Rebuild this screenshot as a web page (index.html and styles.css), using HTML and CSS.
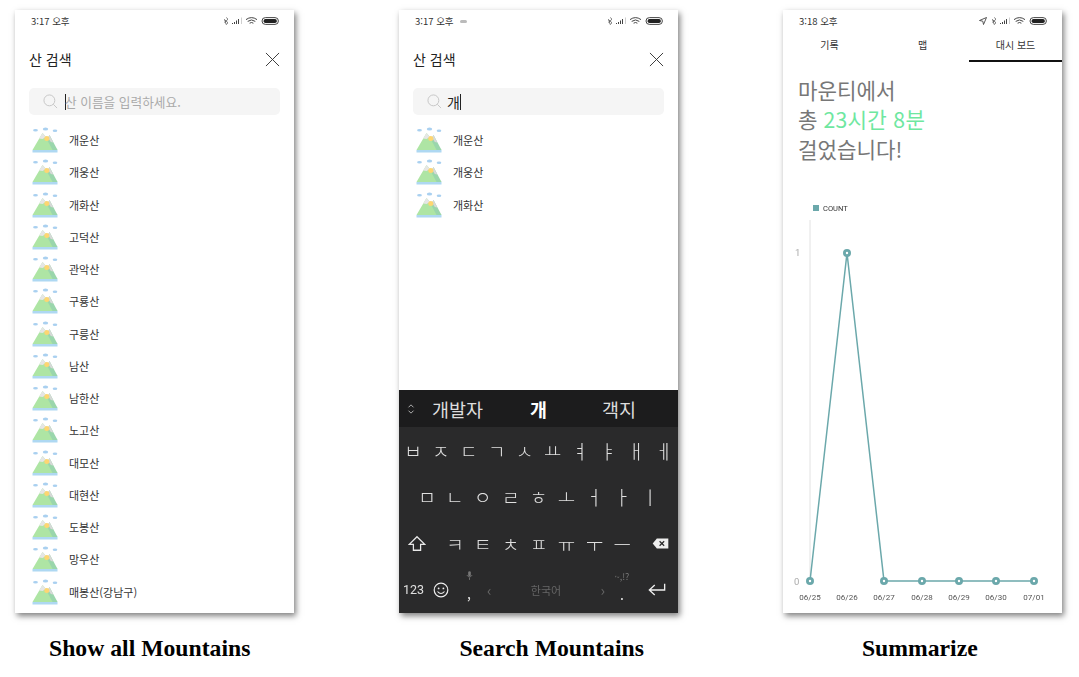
FILE: index.html
```html
<!DOCTYPE html>
<html lang="ko">
<head>
    <meta charset="UTF-8">
    <meta name="viewport" content="width=device-width, initial-scale=1.0">
    <title>Mountain app screens</title>
    <link rel="stylesheet" href="styles.css">
</head>
<body>

    <svg class="defs" width="0" height="0">
        <symbol id="mountain" viewBox="0 0 26 26">
            <rect x="0.500" y="23" width="25" height="2.500" fill="#aed8f2"/>
            <path d="M0.500 23 L10.500 6 L25.500 23 Z" fill="#aee5a4"/>
            <path d="M15 12.500 L17.500 8 L25.500 23 L20.500 23 Z" fill="#9ad6ac"/>
            <path d="M17.500 8 L21.300 15.500 L18.800 15 L16 10.500 Z" fill="#d8d8d8"/>
            <path d="M7.200 11.600 L10.500 6 L14 10 L10.500 12 Z" fill="#e6e6e6"/>
            <circle cx="14.800" cy="11.500" r="2.500" fill="#fdd672"/>
            <ellipse cx="3.500" cy="3.200" rx="2.400" ry="1.300" fill="#a9d0f0"/>
            <ellipse cx="13.500" cy="2" rx="2.700" ry="1.500" fill="#a9d0f0"/>
            <ellipse cx="23" cy="3.800" rx="2.300" ry="1.300" fill="#a9d0f0"/>
        </symbol>
        <symbol id="search" viewBox="0 0 16 16">
            <circle cx="6.800" cy="6.800" r="5.800" fill="none" stroke="#c4c4c4"/>
            <path d="M11 11 L15 15" stroke="#c4c4c4"/>
        </symbol>
        <symbol id="close" viewBox="0 0 16 16">
            <path d="M1 1 L15 15 M15 1 L1 15" stroke="#333" stroke-width="1"/>
        </symbol>
        <symbol id="status" viewBox="0 0 56 8">
            <path d="M3.200 0.500 L5 2.200 L1.500 5.500 M1.500 2.500 L5 5.800 L3.200 7.500 Z" fill="none" stroke="#444" stroke-width="0.700"/>
            <path d="M9 7 h1 v-1 h-1 Z M11 7 h1 v-2 h-1 Z M13 7 h1 v-3.500 h-1 Z M15 7 h1 v-5 h-1 Z" fill="#444"/>
            <path d="M18 7 h0.700 v-6.500 h-0.700 Z" fill="#bbb"/>
            <path d="M23 2.600 Q28.500 -1.400 34 2.600 M24.700 4.400 Q28.500 1.500 32.300 4.400 M26.600 6.200 Q28.500 4.800 30.400 6.200" fill="none" stroke="#444" stroke-width="1"/>
            <rect x="39" y="0.600" width="16.400" height="6.800" rx="3.400" fill="none" stroke="#333" stroke-width="0.900"/>
            <rect x="40.600" y="2" width="13.200" height="4" rx="1.800" fill="#222"/>
        </symbol>
    </svg>

    <main class="screens">

        <section class="phone">
            <div class="statusbar">
                <span class="time">3:17 오후</span>
                <svg class="status-icons"><use href="#status"/></svg>
            </div>
            <div class="title-row">
                <h2>산 검색</h2>
                <svg class="close"><use href="#close"/></svg>
            </div>
            <div class="searchbox">
                <svg class="search-icon"><use href="#search"/></svg>
                <span class="caret"></span>
                <span class="placeholder">산 이름을 입력하세요.</span>
            </div>
            <ul class="mountains">
                <li><svg><use href="#mountain"/></svg>개운산</li>
                <li><svg><use href="#mountain"/></svg>개웅산</li>
                <li><svg><use href="#mountain"/></svg>개화산</li>
                <li><svg><use href="#mountain"/></svg>고덕산</li>
                <li><svg><use href="#mountain"/></svg>관악산</li>
                <li><svg><use href="#mountain"/></svg>구룡산</li>
                <li><svg><use href="#mountain"/></svg>구릉산</li>
                <li><svg><use href="#mountain"/></svg>남산</li>
                <li><svg><use href="#mountain"/></svg>남한산</li>
                <li><svg><use href="#mountain"/></svg>노고산</li>
                <li><svg><use href="#mountain"/></svg>대모산</li>
                <li><svg><use href="#mountain"/></svg>대현산</li>
                <li><svg><use href="#mountain"/></svg>도봉산</li>
                <li><svg><use href="#mountain"/></svg>망우산</li>
                <li><svg><use href="#mountain"/></svg>매봉산(강남구)</li>
            </ul>
        </section>

        <section class="phone">
            <div class="statusbar">
                <span class="time">3:17 오후</span>
                <span class="notif"></span>
                <svg class="status-icons"><use href="#status"/></svg>
            </div>
            <div class="title-row">
                <h2>산 검색</h2>
                <svg class="close"><use href="#close"/></svg>
            </div>
            <div class="searchbox">
                <svg class="search-icon"><use href="#search"/></svg>
                <span class="typed">개</span>
                <span class="caret"></span>
            </div>
            <ul class="mountains">
                <li><svg><use href="#mountain"/></svg>개운산</li>
                <li><svg><use href="#mountain"/></svg>개웅산</li>
                <li><svg><use href="#mountain"/></svg>개화산</li>
            </ul>

            <div class="keyboard">
                <div class="candidates">
                    <svg class="chevrons" viewBox="0 0 8 12"><path d="M1 4 L4 1 L7 4 M1 8 L4 11 L7 8" fill="none" stroke="#ccc"/></svg>
                    <span class="cand-one">개발자</span>
                    <span class="cand-two">개</span>
                    <span class="cand-three">객지</span>
                </div>
                <div class="keys">
                    <div class="row">
                        <span>ㅂ</span><span>ㅈ</span><span>ㄷ</span><span>ㄱ</span><span>ㅅ</span><span>ㅛ</span><span>ㅕ</span><span>ㅑ</span><span>ㅐ</span><span>ㅔ</span>
                    </div>
                    <div class="row row-home">
                        <span>ㅁ</span><span>ㄴ</span><span>ㅇ</span><span>ㄹ</span><span>ㅎ</span><span>ㅗ</span><span>ㅓ</span><span>ㅏ</span><span>ㅣ</span>
                    </div>
                    <div class="row row-shift">
                        <span><svg class="shift" viewBox="0 0 20 18"><path d="M10 1.500 L18.500 10 H14 V16.500 H6 V10 H1.500 Z" fill="none" stroke="#e8e8e8" stroke-width="1.400"/></svg></span>
                        <span>ㅋ</span><span>ㅌ</span><span>ㅊ</span><span>ㅍ</span><span>ㅠ</span><span>ㅜ</span><span>ㅡ</span>
                        <span><svg class="backspace" viewBox="0 0 18 12"><path d="M5 0.500 H17.500 V11.500 H5 L0.500 6 Z" fill="#eee"/><path d="M8 3.500 L13 8.500 M13 3.500 L8 8.500" stroke="#2a2a2b" stroke-width="1.300"/></svg></span>
                    </div>
                    <div class="row-bottom">
                        <span class="num">123</span>
                        <svg class="emoji" viewBox="0 0 16 16"><circle cx="8" cy="8" r="6.800" fill="none" stroke="#eee" stroke-width="1.200"/><circle cx="5.600" cy="6.400" r="0.900" fill="#eee"/><circle cx="10.400" cy="6.400" r="0.900" fill="#eee"/><path d="M4.500 9.500 Q8 13.500 11.500 9.500" fill="none" stroke="#eee" stroke-width="1.100"/></svg>
                        <span class="stack stack-comma">
                            <svg class="mic" viewBox="0 0 8 11"><rect x="2.500" y="0.500" width="3" height="6" rx="1.500" fill="#777"/><path d="M1 5 Q4 9.500 7 5 M4 8 V10.500" fill="none" stroke="#777"/></svg>
                            <b>,</b>
                        </span>
                        <span class="space">
                            <i>‹</i><em>한국어</em><i>›</i>
                        </span>
                        <span class="stack stack-dot">
                            <small>~,!?</small>
                            <b>.</b>
                        </span>
                        <svg class="enter" viewBox="0 0 20 16"><path d="M18.500 1.500 V8.500 H2 M7.500 3 L1.500 8.500 L7.500 14" fill="none" stroke="#eee" stroke-width="1.500"/></svg>
                    </div>
                </div>
            </div>
        </section>

        <section class="phone">
            <div class="statusbar statusbar-dash">
                <span class="time">3:18 오후</span>
                <svg class="location" viewBox="0 0 8 8"><path d="M7.500 0.500 L0.500 3.500 L3.800 4.200 L4.500 7.500 Z" fill="none" stroke="#444" stroke-width="0.900"/></svg>
                <svg class="status-icons"><use href="#status"/></svg>
            </div>
            <nav class="tabs">
                <span>기록</span>
                <span>맵</span>
                <span class="active">대시 보드</span>
            </nav>
            <p class="summary">마운티에서<br>총 <span class="hours">23시간 8분</span><br>걸었습니다!</p>
            <svg class="chart" viewBox="0 0 279 412" width="279" height="412">
                <rect x="30" y="12" width="6" height="6" fill="#6ba8ab"/>
                <text x="40" y="18" class="legend">COUNT</text>
                <line x1="27" y1="27" x2="27" y2="388" stroke="#e2e2e2"/>
                <text x="12" y="63" class="y-label">1</text>
                <text x="11" y="392" class="y-label">0</text>
                <polyline points="27,388 64,60 101,388 139,388 176,388 213,388 251,388" fill="none" stroke="#6ba8ab" stroke-width="1.500"/>
                <g class="points">
                    <circle cx="27" cy="388" r="2.600"/>
                    <circle cx="64" cy="60" r="2.600"/>
                    <circle cx="101" cy="388" r="2.600"/>
                    <circle cx="139" cy="388" r="2.600"/>
                    <circle cx="176" cy="388" r="2.600"/>
                    <circle cx="213" cy="388" r="2.600"/>
                    <circle cx="251" cy="388" r="2.600"/>
                </g>
                <g class="x-labels">
                    <text x="27" y="407">06/25</text>
                    <text x="64" y="407">06/26</text>
                    <text x="101" y="407">06/27</text>
                    <text x="139" y="407">06/28</text>
                    <text x="176" y="407">06/29</text>
                    <text x="213" y="407">06/30</text>
                    <text x="251" y="407">07/01</text>
                </g>
            </svg>
        </section>

    </main>

    <footer class="captions">
        <h3 class="cap-all">Show all Mountains</h3>
        <h3 class="cap-search">Search Mountains</h3>
        <h3 class="cap-summary">Summarize</h3>
    </footer>

</body>
</html>
```

FILE: styles.css
```css
* {
    box-sizing: border-box;
}
html, body {
    height: 100%;
}
body {
    margin: 0;
    background: #fff;
    color: #333;
    font-family: "Noto Sans CJK KR", "Noto Sans", sans-serif;
    overflow: hidden;
}
.defs {
    display: block;
    height: 0;
}
.screens {
    display: flex;
    gap: 105px;
    padding: 10px 0 0 15px;
}
.phone {
    width: 279px;
    height: 603px;
    background: #fff;
    box-shadow: 2px 3px 6px rgba(0, 0, 0, 0.5);
    display: flex;
    flex-direction: column;
    overflow: hidden;
}

/* status bar */
.statusbar {
    height: 22px;
    display: flex;
    align-items: center;
    padding: 0 15px 0 16px;
    flex-shrink: 0;
}
.time {
    font-size: 9.500px;
    color: #333;
}
.notif {
    width: 7px;
    height: 3px;
    margin-left: 6px;
    border-radius: 2px;
    background: #bbb;
}
.status-icons {
    width: 56px;
    height: 8px;
    margin-left: auto;
}
.location {
    width: 8px;
    height: 8px;
    margin-left: auto;
    margin-right: 4px;
}
.statusbar-dash .status-icons {
    margin-left: 0;
}

/* search screens */
.title-row {
    display: flex;
    align-items: center;
    justify-content: space-between;
    padding: 15px 14px 0 14px;
    height: 39px;
}
h2 {
    margin: 0;
    font-size: 14px;
    font-weight: 400;
    color: #222;
}
.close {
    width: 15px;
    height: 15px;
}
.searchbox {
    margin: 17px 14px 0 14px;
    height: 27px;
    background: #f5f5f5;
    border-radius: 5px;
    display: flex;
    align-items: center;
    padding-left: 14px;
}
.search-icon {
    width: 15px;
    height: 15px;
    margin-right: 7px;
}
.caret {
    width: 1px;
    height: 16px;
    background: #222;
}
.placeholder {
    font-size: 12.700px;
    color: #aaa;
    margin-left: -1px;
}
.typed {
    font-size: 14px;
    color: #222;
    margin-left: -2px;
}
.mountains {
    list-style: none;
    margin: 9px 0 0 0;
    padding: 0 0 0 17px;
}
.mountains li {
    height: 32.250px;
    display: flex;
    align-items: center;
    font-size: 11px;
    color: #333;
}
.mountains svg {
    width: 26px;
    height: 26px;
    margin-right: 11px;
}

/* keyboard */
.keyboard {
    margin-top: auto;
    height: 223px;
    background: #2a2a2b;
    color: #e0e0e0;
    display: flex;
    flex-direction: column;
}
.candidates {
    height: 37px;
    background: #1c1c1d;
    display: flex;
    align-items: center;
    font-size: 18.500px;
    padding-left: 8px;
    color: #ddd;
}
.chevrons {
    width: 8px;
    height: 10px;
}
.cand-one {
    margin-left: 17px;
}
.cand-two {
    margin-left: 47px;
    font-weight: 700;
    color: #fff;
}
.cand-three {
    margin-left: 55px;
}
/* own layer, keeps the thin jamo strokes free of colour fringes */
.keys {
    flex: 1;
    display: flex;
    flex-direction: column;
    will-change: transform;
}
.row {
    height: 46.500px;
    display: grid;
    grid-template-columns: repeat(10, 1fr);
    align-items: center;
    justify-items: center;
    font-size: 19px;
    font-weight: 300;
}
.row span {
    display: flex;
    align-items: center;
}
.row-home {
    grid-template-columns: repeat(9, 27.900px);
    padding-left: 14px;
}
.row-shift {
    grid-template-columns: 42px repeat(7, 27.900px) 42px;
}
.shift {
    width: 18px;
    height: 17px;
    margin-left: -6px;
}
.backspace {
    width: 17px;
    height: 11px;
    margin-left: 6px;
}
.row-bottom {
    flex: 1;
    display: flex;
    align-items: center;
    padding-left: 4px;
}
.num {
    font-family: "Roboto", sans-serif;
    font-size: 12.500px;
    width: 30px;
}
.emoji {
    width: 16px;
    height: 16px;
}
.stack {
    display: flex;
    flex-direction: column;
    align-items: center;
    height: 40px;
    justify-content: flex-start;
}
.stack b {
    font-size: 14px;
    font-weight: 400;
    line-height: 16px;
}
.stack-comma {
    width: 24px;
    margin-left: 8px;
}
.mic {
    width: 7px;
    height: 11px;
    margin-bottom: 4px;
}
.stack-dot {
    width: 22px;
}
.stack-dot small {
    font-size: 9px;
    color: #777;
    line-height: 13px;
    margin-bottom: 3px;
}
.space {
    width: 130px;
    display: flex;
    align-items: center;
    justify-content: space-between;
    padding: 0 6px;
    color: #666;
    font-size: 11px;
}
.space i {
    font-style: normal;
    font-size: 15px;
}
.space em {
    font-style: normal;
}
.enter {
    width: 18px;
    height: 15px;
    margin-left: 15px;
}

/* dashboard */
.tabs {
    display: grid;
    grid-template-columns: repeat(3, 1fr);
    height: 30px;
    flex-shrink: 0;
    font-size: 10px;
    color: #333;
    text-align: center;
}
.tabs span {
    line-height: 25px;
}
.tabs .active {
    border-bottom: 2px solid #111;
}
.summary {
    margin: 13px 0 0 15px;
    font-size: 21.200px;
    line-height: 29.300px;
    color: #777;
}
.hours {
    color: #6ee7a0;
    letter-spacing: 0.300px;
}
.chart {
    display: block;
    margin-top: 30px;
    flex-shrink: 0;
    will-change: transform;
}
.legend {
    font-size: 7.500px;
    fill: #333;
    font-family: "Roboto", sans-serif;
}
.y-label {
    font-size: 9.500px;
    fill: #aaa;
    font-family: "Roboto", sans-serif;
}
.points circle {
    fill: #fff;
    stroke: #6ba8ab;
    stroke-width: 2.800;
}
.x-labels text {
    font-size: 8px;
    fill: #555;
    font-family: "Roboto", sans-serif;
    text-anchor: middle;
}

/* captions */
.captions {
    display: flex;
    padding-top: 22px;
}
h3 {
    margin: 0;
    font-family: "Liberation Serif", serif;
    font-size: 23.700px;
    font-weight: 700;
    color: #000;
    line-height: 26px;
    white-space: nowrap;
}
.cap-all {
    margin-left: 49px;
}
.cap-search {
    margin-left: 209px;
}
.cap-summary {
    margin-left: 218px;
}
```
